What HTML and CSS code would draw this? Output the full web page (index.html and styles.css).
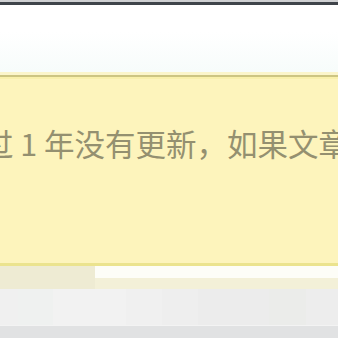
FILE: index.html
```html
<!doctype html>
<html lang="zh-CN">
<head>
    <meta charset="UTF-8">
    <title>文章提示</title>
    <link rel="stylesheet" href="styles.css">
</head>
<body>
<!-- top bar -->
<div class="topbar"></div>
<div class="head"></div>

<div class="notice">
    <div class="notice-inner">
        <p class="notice-text">过 1 年没有更新，如果文章内容失效，请留言反馈。</p>
    </div>
</div>

<div class="shade">
    <div class="shade-left"></div>
    <div class="shade-right"></div>
</div>

<ul class="cols">
    <li></li>
    <li></li>
    <li></li>
    <li></li>
    <li></li>
    <li></li>
    <li></li>
    <li></li>
</ul>
<div class="bottom"></div>
</body>
</html>
```

FILE: styles.css
```css
* {
    margin: 0;
    padding: 0;
}

html, body {
    width: 338px;
    height: 338px;
    overflow: hidden;
    background: #fff;
}

ul, li {
    list-style: none;
}

.topbar {
    height: 3px;
    background: #3f444a;
    border-top: 2px solid #cfd0d2;
}

.head {
    height: 67px;
    background: linear-gradient(#fff 40%, #f7fcfb);
}

.notice {
    border-top: 3px solid #fbf5cb;
}

.notice-inner {
    background: #fdf4bc;
    border-top: 2px solid #cdc582;
    border-bottom: 3px solid #ebe38e;
    box-shadow: inset 0 2px 0 #f9f0aa;
    padding: 51px 0 105px;
    overflow: hidden;
}

.notice-text {
    font-family: "Noto Sans CJK SC", "Noto Sans", sans-serif;
    font-size: 30.5px;
    line-height: 30px;
    color: #949070;
    white-space: nowrap;
    text-indent: -17px;
}

.shade {
    display: flex;
    height: 23px;
}

.shade-left {
    width: 95px;
    background: #eeebd3;
}

.shade-right {
    flex: 1;
    background: linear-gradient(#fdfdf7 50%, #f3f0d8 50%);
}

.cols {
    display: flex;
    height: 36px;
    border-bottom: 1px solid #f3f3f3;
}

.cols li {
    width: 36px;
    background: #f0f0f0;
}

.cols li:nth-child(1) {
    width: 18px;
}

.cols li:nth-child(2) {
    width: 35px;
    background: #eff1f0;
}

.cols li:nth-child(3) {
    width: 73px;
    background: #f2f2f2;
}

.cols li:nth-child(5) {
    background: #eeeeee;
}

.cols li:nth-child(6) {
    width: 71px;
    background: #ececec;
}

.cols li:nth-child(7) {
    width: 37px;
    background: #ebecea;
}

.cols li:nth-child(8) {
    flex: 1;
    background: #ededed;
}

.bottom {
    height: 13px;
    background: #e1e2e3;
}
```
